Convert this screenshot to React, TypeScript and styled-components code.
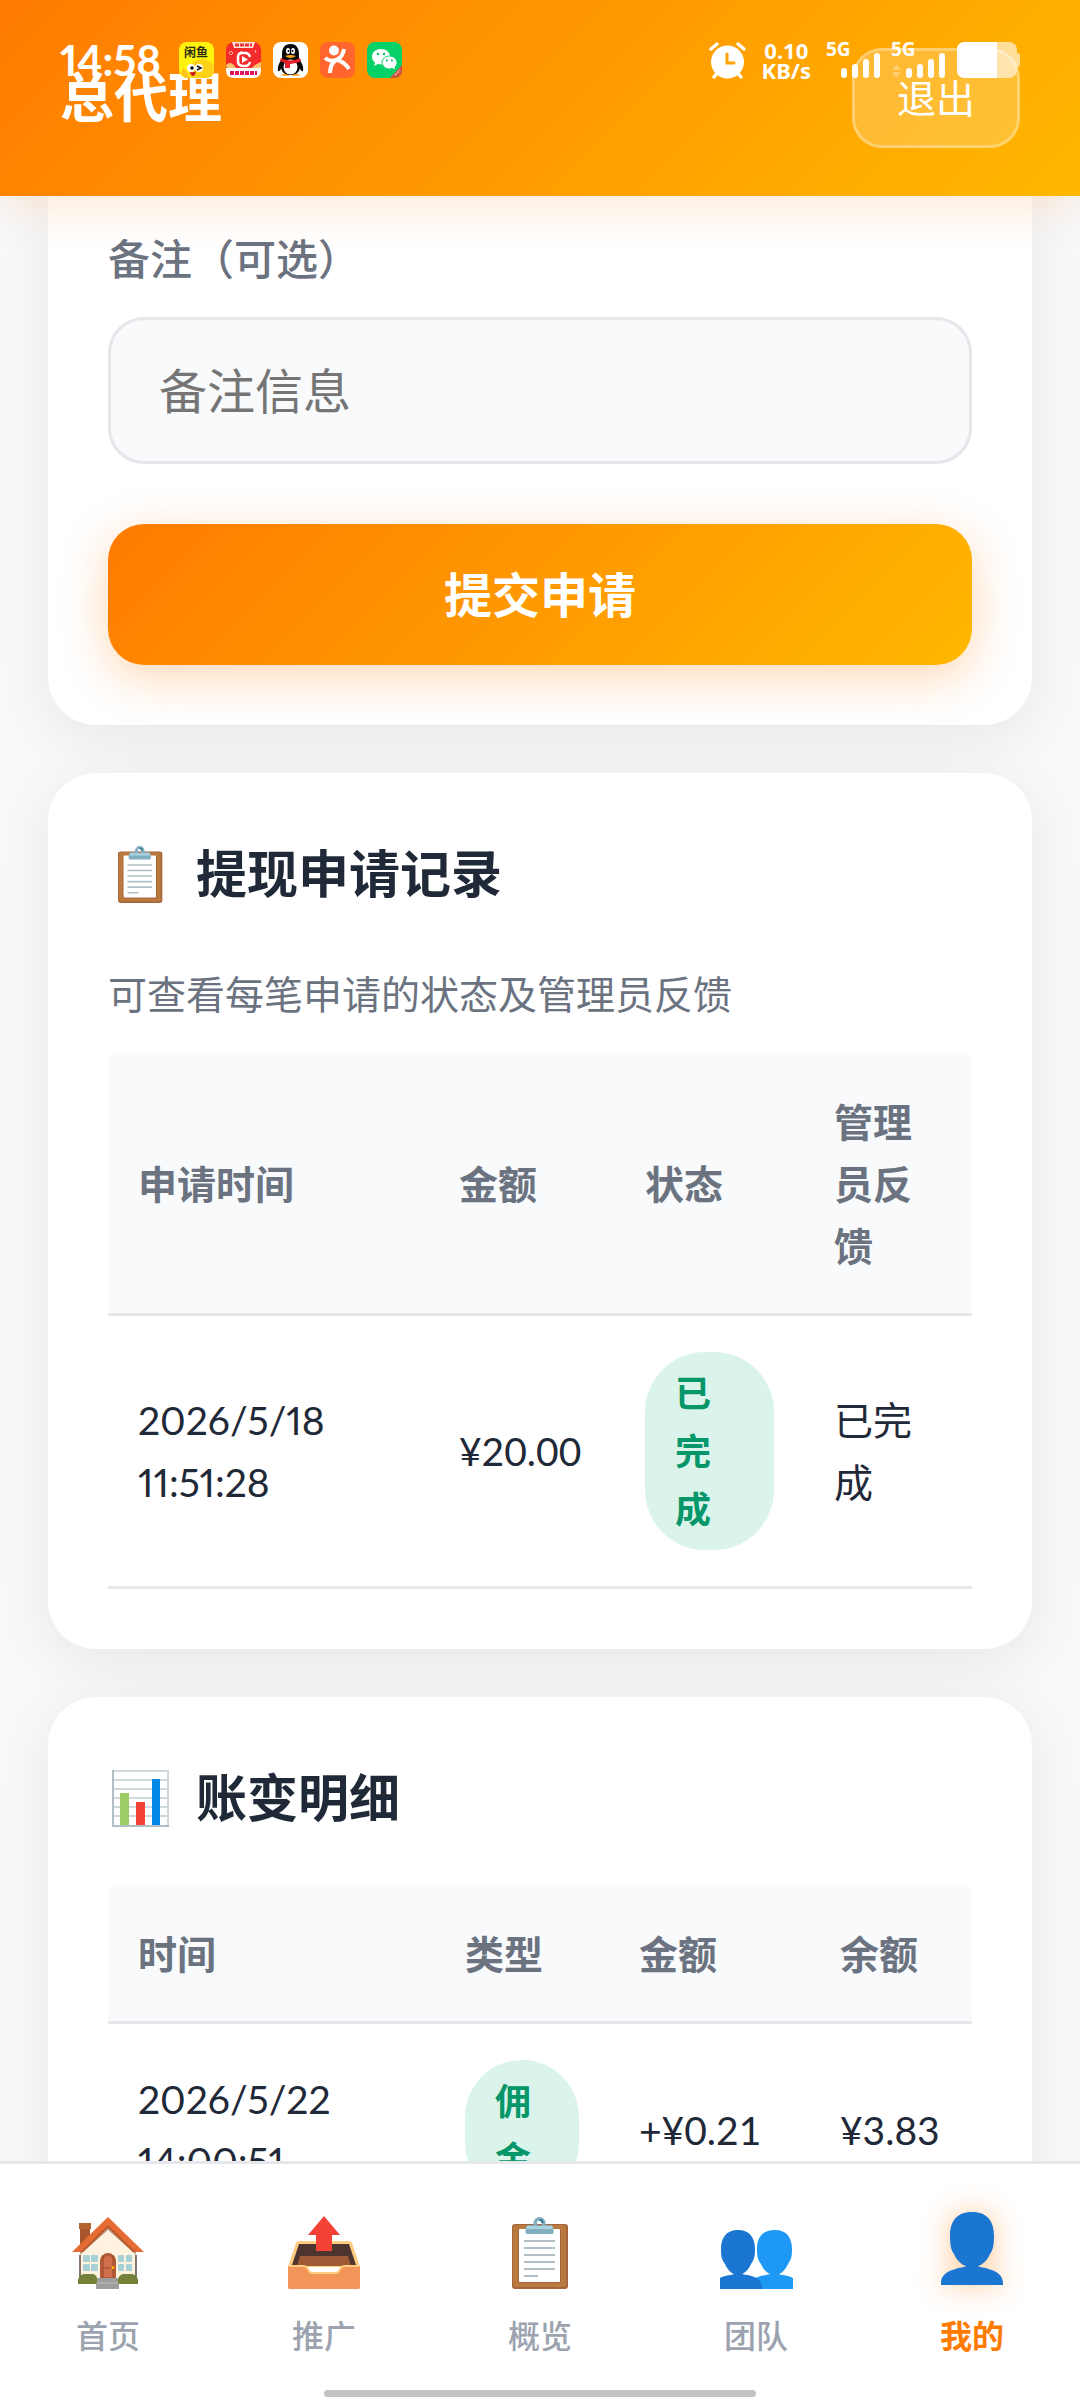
import React from 'react';
import styled, { createGlobalStyle, css } from 'styled-components';

const theme = {
  gradient: 'linear-gradient(135deg, #ff7b00 0%, #ffb800 100%)',
  primary: '#ff7b00',
  background: '#f8f9fb',
  surface: '#ffffff',
  muted: '#f8fafc',
  border: '#e5e7eb',
  text: '#1f2937',
  textSoft: '#6b7280',
  textFaint: '#9ca3af',
  success: '#059669',
  successSoft: '#dbf4eb',
  font: `Lato, 'Noto Sans CJK SC', sans-serif`,
};

const GlobalStyle = createGlobalStyle`
  * {
    box-sizing: border-box;
  }

  body {
    margin: 0;
    background: ${theme.background};
    color: ${theme.text};
    font-family: ${theme.font};
  }

  svg {
    display: block;
    flex-shrink: 0;
    overflow: visible;
  }
`;

const Screen = styled.div`
  display: flex;
  flex-direction: column;
  height: 100vh;
  overflow: hidden;
`;

const Header = styled.header`
  position: relative;
  z-index: 2;
  display: flex;
  align-items: center;
  justify-content: space-between;
  padding: 48px 60px;
  background: ${theme.gradient};
  box-shadow: 0 6px 48px rgba(255, 123, 0, 0.2);
`;

const HeaderTitle = styled.h1`
  margin: 0;
  color: #fff;
  font-size: 54px;
  font-weight: 700;
  line-height: 82px;
`;

const LogoutButton = styled.button`
  padding: 16px 42px;
  border: 3px solid rgba(255, 255, 255, 0.3);
  border-radius: 30px;
  background: rgba(255, 255, 255, 0.2);
  color: #fff;
  font-family: inherit;
  font-size: 39px;
  line-height: 62px;
  cursor: pointer;
`;

/* The system bar floats over the page header. */
const StatusBar = styled.div`
  position: absolute;
  inset: 42px 60px auto;
  z-index: 1;
  display: flex;
  align-items: center;
  justify-content: space-between;
  color: #fff;
  pointer-events: none;
`;

const StatusGroup = styled.div<{ $gap: number }>`
  display: flex;
  align-items: center;
  gap: ${({ $gap }) => $gap}px;
  height: 36px;
`;

const Clock = styled.time`
  margin-right: 6px;
  font-size: 42px;
  font-weight: 700;
  line-height: 32px;
  font-variant-numeric: proportional-nums;
`;

const NetSpeed = styled.div`
  margin: 0 5px;
  font-family: 'Noto Sans', sans-serif;
  font-size: 22px;
  font-weight: 700;
  line-height: 20px;
  text-align: center;
`;

const Content = styled.main`
  display: flex;
  flex: 1;
  flex-direction: column;
  gap: 48px;
  min-height: 0;
  padding: 0 48px;
  overflow-y: auto;
  scrollbar-width: none;
`;

const Card = styled.section<{ $continued?: boolean }>`
  flex-shrink: 0;
  padding: 60px;
  border-radius: 48px;
  background: ${theme.surface};
  box-shadow: 0 12px 60px rgba(0, 0, 0, 0.08);

  ${({ $continued }) =>
    $continued &&
    css`
      padding-top: 30px;
      border-radius: 0 0 48px 48px;
    `}
`;

const CardTitle = styled.h2`
  display: flex;
  align-items: center;
  gap: 24px;
  margin: 0 0 48px;
  font-size: 51px;
  font-weight: 700;
  line-height: 82px;
`;

const TitleIcon = styled.span`
  display: flex;
  justify-content: center;
  width: 64px;
`;

const CardHint = styled.p`
  margin: 0 0 30px;
  color: ${theme.textSoft};
  font-size: 39px;
  line-height: 62px;
`;

const FieldLabel = styled.label`
  display: block;
  margin-bottom: 24px;
  color: ${theme.textSoft};
  font-size: 42px;
  font-weight: 500;
  line-height: 67px;
`;

const TextInput = styled.input`
  display: block;
  width: 100%;
  height: 147px;
  margin-bottom: 60px;
  padding: 0 48px;
  border: 3px solid ${theme.border};
  border-radius: 36px;
  background: ${theme.muted};
  color: ${theme.text};
  font-family: inherit;
  font-size: 48px;

  &::placeholder {
    color: #757575;
  }
`;

const SubmitButton = styled.button`
  display: block;
  width: 100%;
  padding: 32px;
  border: none;
  border-radius: 36px;
  background: ${theme.gradient};
  box-shadow: 0 12px 48px rgba(255, 123, 0, 0.3);
  color: #fff;
  font-family: inherit;
  font-size: 48px;
  font-weight: 700;
  line-height: 77px;
  cursor: pointer;
`;

const Table = styled.table`
  width: 100%;
  border-spacing: 0;
  table-layout: fixed;
  font-size: 39px;
  line-height: 62px;
  text-align: left;
`;

const Col = styled.col<{ $share: number }>`
  width: ${({ $share }) => ($share / 288) * 100}%;
`;

const Th = styled.th`
  padding: 36px 30px;
  border-bottom: 3px solid ${theme.border};
  background: ${theme.muted};
  color: ${theme.textSoft};
  font-weight: 600;
`;

const Td = styled.td`
  padding: 36px 30px;
  border-bottom: 3px solid ${theme.border};
  vertical-align: middle;
`;

const TimeCell = styled(Td)`
  font-variant-numeric: proportional-nums;
`;

const Badge = styled.span`
  display: block;
  padding: 12px 30px;
  border-radius: 60px;
  background: ${theme.successSoft};
  color: ${theme.success};
  font-size: 36px;
  font-weight: 600;
  line-height: 58px;
`;

const TabBar = styled.nav`
  position: relative;
  z-index: 2;
  display: flex;
  padding: 48px 0 42px;
  border-top: 3px solid ${theme.border};
  background: ${theme.surface};
`;

const TabLink = styled.a<{ $active?: boolean }>`
  display: flex;
  flex: 1;
  flex-direction: column;
  align-items: center;
  gap: 24px;
  color: ${({ $active }) => ($active ? theme.primary : theme.textFaint)};
  font-size: 32px;
  font-weight: ${({ $active }) => ($active ? 700 : 500)};
  line-height: 45px;
  text-decoration: none;
`;

const TabIcon = styled.span<{ $active?: boolean }>`
  display: flex;
  align-items: flex-end;
  height: 77px;

  ${({ $active }) =>
    $active &&
    css`
      align-items: flex-start;
      filter: drop-shadow(0 0 15px rgba(255, 123, 0, 0.4));
    `}
`;

const HomeIndicator = styled.div`
  position: absolute;
  bottom: 3px;
  left: 50%;
  width: 40%;
  height: 7px;
  border-radius: 4px;
  background: #c3c3c3;
  transform: translateX(-50%);
`;

const ClipboardIcon: React.FC<{ height?: number }> = ({ height = 72 }) => (
  <svg height={height} viewBox="0 0 56 72" aria-hidden="true">
    <rect y="7" width="56" height="65" rx="3" fill="#a5643a" />
    <rect x="1" y="8" width="53" height="62" rx="2" fill="#ba793e" />
    <rect x="6" y="12" width="43" height="54" rx="2" fill="#a5643a" />
    <rect x="7" y="12" width="41" height="53" rx="1" fill="#fff" />
    <path
      d="M12 24h31M12 31h31M12 38h31M12 45h31M12 52h31M12 59h14"
      stroke="#b0bec5"
      strokeWidth="2"
    />
    <path
      d="M27.500 0a6 6 0 0 0-6 6v2h-6l-2 3v5q0 1 2 1h24q2 0 2-1v-5l-2-3h-6V6a6 6 0 0 0-6-6zm0 3.500a2.500 2.500 0 1 1 0 5 2.500 2.500 0 0 1 0-5z"
      fill="#82aec0"
      fillRule="evenodd"
    />
    <path d="M15 9h25l1 3H14z" fill="#a8d3df" />
    <path d="M27.500 3a3 3 0 0 1 3 3" stroke="#2f7889" strokeWidth="2" fill="none" />
  </svg>
);

const ChartIcon = () => (
  <svg width="57" height="57" viewBox="0 0 57 57" aria-hidden="true">
    <rect x="1" y="1" width="55" height="55" fill="#fff" stroke="#cfd8dc" strokeWidth="2" />
    <path d="M1 10h55M1 19h55M1 28h55M1 37h55M1 46h55" stroke="#cfd8dc" strokeWidth="2" />
    <path d="M1 0v56h56" stroke="#b0bec5" strokeWidth="2" fill="none" />
    <rect x="8" y="23" width="9" height="32" fill="#9ccc65" />
    <rect x="24" y="32" width="9" height="23" fill="#f44336" />
    <rect x="40" y="9" width="8" height="46" fill="#0288e6" />
  </svg>
);

const HouseIcon = () => (
  <svg width="72" height="72" viewBox="0 0 72 72" aria-hidden="true">
    <path d="M8 6h10v20L8 34z" fill="#a9562f" />
    <path d="M7 6h12v6H7z" fill="#b5622f" />
    <path d="M8 33 36 6l28 27v31H8z" fill="#fff3e0" />
    <path d="M8 34 36 8l28 26v4L36 13 8 38z" fill="#bfa590" />
    <path d="M8 38v22M64 38v22" stroke="#5d4a42" strokeWidth="1.500" />
    <path d="M36 0 72 35h-9L36 9 9 35H0z" fill="#e66c33" />
    <path d="M36 8 64 35h-3L36 11 11 35H8z" fill="#bf5a2c" />
    <path d="M28 62V44a8 8 0 0 1 16 0v18z" fill="#b55a38" />
    <path d="M31 60V44a5 5 0 0 1 10 0v16z" fill="#d0704c" />
    <path d="M31 51h10M31 39v22M41 39v22" stroke="#9b4a2d" strokeWidth="1" />
    <circle cx="41" cy="50.500" r="1.500" fill="#ffb300" />
    <g fill="#a8d1d6">
      <rect x="11" y="38" width="7" height="7" rx="1" />
      <rect x="19" y="38" width="7" height="7" rx="1" />
      <rect x="11" y="47" width="7" height="7" rx="1" />
      <rect x="19" y="47" width="7" height="7" rx="1" />
      <rect x="46" y="38" width="6" height="7" rx="1" />
      <rect x="54" y="38" width="6" height="7" rx="1" />
      <rect x="46" y="47" width="6" height="7" rx="1" />
      <rect x="54" y="47" width="6" height="7" rx="1" />
    </g>
    <path d="M6 67v-4q1-5 6-6h9q4 1 4 5v5zM46 67v-5q1-4 5-5h9q5 1 6 6v4z" fill="#738238" />
    <path d="M25 61h21v5h1v6H24v-6h1z" fill="#9e9e9e" />
    <path d="M25 66h21" stroke="#bdbdbd" strokeWidth="1" />
  </svg>
);

const OutboxIcon = () => (
  <svg width="72" height="73" viewBox="0 0 72 73" aria-hidden="true">
    <path d="M10 25h52l2 2 8 24H0l8-24z" fill="#ffcc80" />
    <path d="M11 28h50l7 21H4z" fill="#4e342e" />
    <path d="M12 40h48l3 10H9z" fill="#a05a35" />
    <path d="M0 50h17l5 6h28l5-6h17v22l-1 1H1l-1-1z" fill="#f19558" />
    <path d="M1 50h15q2 0 3 2l2 3q1 2 3 2h24q2 0 3-2l2-3q1-2 3-2h15" stroke="#ffcc80" strokeWidth="2" fill="none" />
    <path d="M36 0 52 19h-8v16H28V19h-8z" fill="#f44336" />
  </svg>
);

const TeamIcon = () => (
  <svg width="73" height="59" viewBox="0 0 73 59" aria-hidden="true">
    <path
      d="M55 0c12 0 17 8 17 19 0 8-1 11-4 15-2 5-6 9-9 10 1 1 9 1 14 4v11H29l7-11c5-3 13-3 14-4-3-1-7-5-9-10-3-4-4-7-4-15C37 8 42 0 55 0z"
      fill="#1d98f5"
    />
    <path
      d="M18 0c12 0 17 8 17 19 0 8-1 11-4 15-2 5-6 9-9 10 5 1 20 2 20 13v2H0V48c5-3 13-3 14-4-3-1-7-5-9-10-3-4-4-7-4-15C1 8 6 0 18 0z"
      fill="#1b76d2"
    />
  </svg>
);

const PersonIcon = () => (
  <svg width="62" height="73" viewBox="0 0 62 73" aria-hidden="true">
    <path
      d="M31 0c16 0 22 10 22 24 0 9-1 14-4 18-3 7-8 11-12 12 1 2 25 2 25 17v2H0v-2c0-15 24-15 25-17-4-1-9-5-12-12-3-4-4-9-4-18C9 10 15 0 31 0z"
      fill="#1b76d2"
    />
  </svg>
);

const FishAppIcon = () => (
  <svg width="35" height="36" viewBox="0 0 35 36" aria-hidden="true">
    <rect width="35" height="36" rx="8" fill="#fff20d" />
    <path d="M35 25v3q0 8-8 8H12q-4-4-2-10 4-9 12-8 3-3 5 0 5 0 8 7z" fill="#ffd21a" />
    <path d="M10 36c-2-8-4-8-6-10l-2 5 4 5z" fill="#ffc21a" />
    <text x="5" y="15" fontSize="12" fontWeight="700" fill="#2a2a10" fontFamily="Noto Sans CJK SC, sans-serif">
      闲鱼
    </text>
    <circle cx="12" cy="26" r="4" fill="#fff" />
    <circle cx="20" cy="26" r="4" fill="#fff" />
    <circle cx="13" cy="26" r="1.800" fill="#111" />
    <path d="m18 24 4 2-4 2" stroke="#111" strokeWidth="1.500" fill="none" />
    <path d="M11 30q4 1 6-1-1 5-3 5t-3-4z" fill="#c61616" />
  </svg>
);

const VideoAppIcon = () => (
  <svg width="35" height="36" viewBox="0 0 35 36" aria-hidden="true">
    <rect width="35" height="36" rx="8" fill="#f52a2a" />
    <path d="M6 0h23l-2 6H8z" fill="#ffe3dc" />
    <path d="M9 3h17" stroke="#ee3434" strokeWidth="3" strokeDasharray="4 1" />
    <path d="M0 26h35v2q0 8-8 8H8q-8 0-8-8z" fill="#fff" />
    <path d="M4 31h27" stroke="#e2125f" strokeWidth="4" strokeDasharray="4 1" />
    <path d="M0 23q5-5 10 3H1zM35 20q-6 2-9 6h9z" fill="#ffc46b" />
    <path
      d="M24 15q-1-4-5-4h-3q-4 0-4 4v4q0 5 5 5h2q4 0 5-4M12 13l4-3"
      stroke="#fff"
      strokeWidth="2.500"
      fill="none"
    />
    <path d="m16 14 6 3.500-6 3.500z" fill="#fff" />
    <path d="m3 11 2-2 2 2-2 2zM29 8l1 3" stroke="#ffb0a0" fill="none" />
  </svg>
);

const PenguinAppIcon = () => (
  <svg width="35" height="36" viewBox="0 0 35 36" aria-hidden="true">
    <rect width="35" height="36" rx="8" fill="#fff" />
    <path d="M8 33q4-3 9 0-4 2-9 0zM18 33q5-3 9 0-5 2-9 0z" fill="#f7a51b" />
    <path
      d="M17.500 2C11 2 9 7 9 12v5c-3 4-5 8-4 12 1 1 3-1 3-3 1 5 5 7 9.500 7s8.500-2 9.500-7c0 2 2 4 3 3 1-4-1-8-4-12v-5c0-5-2-10-8.500-10z"
      fill="#0a0a0a"
    />
    <ellipse cx="17.500" cy="25" rx="7" ry="7.500" fill="#fff" />
    <ellipse cx="15" cy="9" rx="2" ry="3" fill="#fff" />
    <ellipse cx="20" cy="9" rx="2" ry="3" fill="#fff" />
    <circle cx="15.500" cy="9" r="1" />
    <circle cx="19.500" cy="9" r="1" />
    <path d="M12 14q5.500-2 11 0-5.500 4-11 0z" fill="#f7a51b" />
    <path d="M8 16q9.500 5 19 0l1 3q-5 3-11 3v4h-5v-5l-5-2z" fill="#e41f2b" />
  </svg>
);

const ReviewAppIcon = () => (
  <svg width="35" height="36" viewBox="0 0 35 36" aria-hidden="true">
    <rect width="35" height="36" rx="8" fill="#ff652d" />
    <circle cx="14" cy="8.500" r="5" fill="#fff" />
    <path
      d="M5 16q5 4 11 2 7-3 8-11M10 31q0-9 6-13 8 1 13 9"
      stroke="#fff"
      strokeWidth="4"
      fill="none"
    />
  </svg>
);

const ChatAppIcon = () => (
  <svg width="35" height="36" viewBox="0 0 35 36" aria-hidden="true">
    <rect width="35" height="36" rx="8" fill="#06d267" />
    <path d="M35 23v5q0 8-8 8h-4z" fill="#cf4f3c" />
    <path d="M14 7c-5 0-9 3-9 7.500 0 2.500 1 4.500 3 6L7 24l4-2 4 .500C22 22 23 18 23 14.500 23 10 19 7 14 7z" fill="#fff" />
    <path
      d="M22.500 14c-4 0-7.500 3-7.500 6.500s3.500 6.500 7.500 6.500l3-.500 3 1.500-.500-3c1.500-1 2-3 2-4.500 0-3.500-3.500-6.500-7.500-6.500z"
      fill="#fff"
      stroke="#06d267"
      strokeWidth="1"
    />
    <g fill="#06b85c">
      <circle cx="11" cy="12" r="1.200" />
      <circle cx="17" cy="12" r="1.200" />
      <circle cx="20" cy="18.500" r="1" />
      <circle cx="25" cy="18.500" r="1" />
    </g>
    <path d="m28 33 5-5" stroke="#f0a79c" strokeWidth="2" strokeDasharray="2 1" />
  </svg>
);

const AlarmIcon = () => (
  <svg width="37" height="37" viewBox="0 0 37 37" aria-hidden="true">
    <path d="m2 7 6-5M35 7l-6-5M5 35l4-5M32 35l-4-5" stroke="#fff" strokeWidth="3.500" strokeLinecap="round" />
    <circle cx="18.500" cy="20" r="16.500" fill="#fff" />
    <path d="M18 12v9h7" stroke="#ffa400" strokeWidth="3" strokeLinecap="round" fill="none" />
  </svg>
);

const SignalIcon: React.FC<{ arrows?: boolean }> = ({ arrows }) => (
  <svg width="54" height="36" viewBox="0 0 54 36" role="img" aria-label="5G">
    <text x="-1" y="14" fontSize="19" fontWeight="700" fill="#fff" fontFamily="Noto Sans, sans-serif">
      5G
    </text>
    <g fill="#fff">
      <rect x="14" y="26" width="6" height="10" rx="3" />
      <rect x="25" y="22" width="6" height="14" rx="3" />
      <rect x="36" y="17" width="6" height="19" rx="3" />
      <rect x="47" y="11" width="6" height="25" rx="3" />
    </g>
    {arrows && <path d="M0 28l4.500-6L9 28zM0 30h9l-4.500 6z" fill="#fff" opacity="0.300" />}
  </svg>
);

const BatteryIcon = () => (
  <svg width="63" height="36" viewBox="0 0 63 36" aria-hidden="true">
    <rect width="60" height="36" rx="8" fill="#fff" opacity="0.600" />
    <path d="M60 11q3 0 3 3v8q0 3-3 3z" fill="#fff" opacity="0.600" />
    <path d="M8 0h32v36H8q-8 0-8-8V8q0-8 8-8z" fill="#fff" />
  </svg>
);

const tabs = [
  { label: '首页', href: '#home', icon: <HouseIcon /> },
  { label: '推广', href: '#promote', icon: <OutboxIcon /> },
  { label: '概览', href: '#overview', icon: <ClipboardIcon /> },
  { label: '团队', href: '#team', icon: <TeamIcon /> },
  { label: '我的', href: '#mine', icon: <PersonIcon />, active: true },
];

const withdrawals = [
  { time: '2026/5/18 11:51:28', amount: '¥20.00', status: '已完成', feedback: '已完成' },
];

const transactions = [
  { time: '2026/5/22 14:00:51', type: '佣金', amount: '+¥0.21', balance: '¥3.83' },
];

const SystemStatus = () => (
  <StatusBar>
    <StatusGroup $gap={12}>
      <Clock>14:58</Clock>
      <FishAppIcon />
      <VideoAppIcon />
      <PenguinAppIcon />
      <ReviewAppIcon />
      <ChatAppIcon />
    </StatusGroup>
    <StatusGroup $gap={11}>
      <AlarmIcon />
      <NetSpeed>
        0.10
        <br />
        KB/s
      </NetSpeed>
      <SignalIcon />
      <SignalIcon arrows />
      <BatteryIcon />
    </StatusGroup>
  </StatusBar>
);

const App: React.FC = () => (
  <>
    <GlobalStyle />
    <Screen>
      <Header>
        <HeaderTitle>总代理</HeaderTitle>
        <LogoutButton type="button">退出</LogoutButton>
        <SystemStatus />
      </Header>

      <Content>
        <Card $continued as="form" onSubmit={(e: React.FormEvent) => e.preventDefault()}>
          <FieldLabel htmlFor="remark">备注（可选）</FieldLabel>
          <TextInput id="remark" type="text" placeholder="备注信息" />
          <SubmitButton type="submit">提交申请</SubmitButton>
        </Card>

        <Card>
          <CardTitle>
            <TitleIcon>
              <ClipboardIcon height={57} />
            </TitleIcon>
            提现申请记录
          </CardTitle>
          <CardHint>可查看每笔申请的状态及管理员反馈</CardHint>
          <Table>
            <colgroup>
              <Col $share={107} />
              <Col $share={62} />
              <Col $share={63} />
              <Col $share={56} />
            </colgroup>
            <thead>
              <tr>
                <Th>申请时间</Th>
                <Th>金额</Th>
                <Th>状态</Th>
                <Th>管理员反馈</Th>
              </tr>
            </thead>
            <tbody>
              {withdrawals.map(row => (
                <tr key={row.time}>
                  <TimeCell>{row.time}</TimeCell>
                  <Td>{row.amount}</Td>
                  <Td>
                    <Badge>{row.status}</Badge>
                  </Td>
                  <Td>{row.feedback}</Td>
                </tr>
              ))}
            </tbody>
          </Table>
        </Card>

        <Card>
          <CardTitle>
            <TitleIcon>
              <ChartIcon />
            </TitleIcon>
            账变明细
          </CardTitle>
          <Table>
            <colgroup>
              <Col $share={109} />
              <Col $share={58} />
              <Col $share={67} />
              <Col $share={54} />
            </colgroup>
            <thead>
              <tr>
                <Th>时间</Th>
                <Th>类型</Th>
                <Th>金额</Th>
                <Th>余额</Th>
              </tr>
            </thead>
            <tbody>
              {transactions.map(row => (
                <tr key={row.time}>
                  <TimeCell>{row.time}</TimeCell>
                  <Td>
                    <Badge>{row.type}</Badge>
                  </Td>
                  <Td>{row.amount}</Td>
                  <Td>{row.balance}</Td>
                </tr>
              ))}
            </tbody>
          </Table>
        </Card>
      </Content>

      <TabBar>
        {tabs.map(tab => (
          <TabLink key={tab.href} href={tab.href} $active={tab.active}>
            <TabIcon $active={tab.active}>{tab.icon}</TabIcon>
            {tab.label}
          </TabLink>
        ))}
        <HomeIndicator />
      </TabBar>
    </Screen>
  </>
);

export default App;
